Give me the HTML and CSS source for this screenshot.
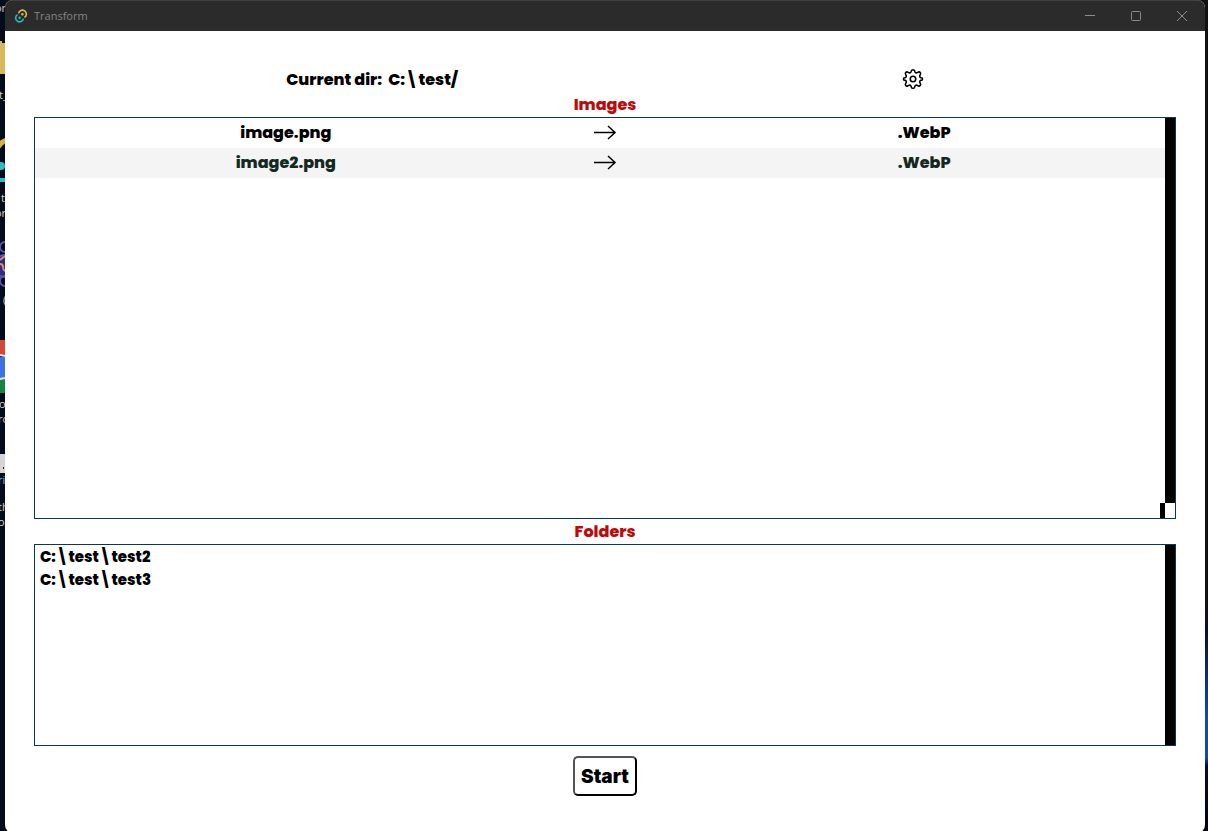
FILE: index.html
```html
<!DOCTYPE html>
<html lang="en">
<head>
<meta charset="utf-8">
<meta name="viewport" content="width=device-width, initial-scale=1">
<title>Transform</title>
<link rel="stylesheet" href="styles.css">
</head>
<body>
<svg class="desktop-left" width="5" height="831" viewBox="0 0 5 831" aria-hidden="true">
  <path fill="#d9b85c" d="M0 41h2v2h3v31H0z"/>
  <path fill="none" stroke="#d9b03c" stroke-width="5" d="M-2 147Q2 141 7 140"/>
  <circle cx="1" cy="166" r="4" fill="#2fb9c4"/>
  <path fill="#2fb9c4" d="M0 178h5v4H0z"/>
  <path fill="#332c78" d="M0 255h5v22H0z"/>
  <g fill="none" stroke="#5a52b0" stroke-width="2"><circle cx="5" cy="247" r="5"/><circle cx="5" cy="266" r="11"/><circle cx="5" cy="281" r="5"/></g>
  <path fill="none" stroke="#d98a80" stroke-width="2" d="M0 260l5-4M0 264q3 0 3 3t2 4"/>
  <path fill="#d34836" d="M0 340h5v15H0z"/><path fill="#3b74e0" d="M0 357h5v21H0z"/>
  <path fill="#188040" d="M0 379h5v14H0z"/><path stroke="#e0e4ef" stroke-width="2" d="M0 355l5 1M0 379l5-1"/>
  <path fill="#d5d5d5" d="M0 454h5v19H0z"/><path fill="#222" d="M3 467h1v2H3z"/>
  <g class="desktop-label">
    <text x="-5" y="12">or</text><text x="-1" y="99">t_</text><text x="1" y="202">t</text>
    <text x="-5" y="217">or</text><text x="3" y="304">(</text><text x="-1" y="408">o</text>
    <text x="-2" y="423">ro</text><text class="link" x="-2" y="484">ri</text>
    <text x="-2" y="511">th</text><text x="-2" y="526">o</text>
  </g>
</svg>
<div class="window">
  <header class="titlebar">
    <svg class="logo" width="14" height="14" viewBox="0 0 14 14" fill="none" aria-hidden="true">
      <path stroke="#e8b94a" stroke-width="1.6" d="M4.6 4.4A3.9 3.9 0 1 1 10.4 8.4"/>
      <path stroke="#27b8c6" stroke-width="1.6" d="M9.4 9.6A3.9 3.9 0 1 1 3.6 5.6"/>
      <circle cx="8.4" cy="5.2" r="1.2" fill="#e8b94a"/><circle cx="5.6" cy="8.8" r="1.2" fill="#27b8c6"/>
    </svg>
    <span class="title">Transform</span>
    <div class="controls">
      <button class="control" type="button" aria-label="Minimize"><svg width="12" height="12" viewBox="0 0 12 12"><path d="M1 5.5h10"/></svg></button>
      <button class="control" type="button" aria-label="Maximize"><svg width="12" height="12" viewBox="0 0 12 12"><rect x="1.5" y="1.5" width="9" height="9" rx="1"/></svg></button>
      <button class="control" type="button" aria-label="Close"><svg width="12" height="12" viewBox="0 0 12 12"><path d="M1 1l10 10M11 1L1 11"/></svg></button>
    </div>
  </header>
  <main class="content">
    <div class="toolbar">
      <span>Current dir: <span class="path">C:\test/</span></span>
      <button class="settings" type="button" aria-label="Settings">
        <svg width="22" height="22" viewBox="0 0 24 24" fill="none" stroke="#000" stroke-width="1.7" stroke-linejoin="round" stroke-linecap="round"><circle cx="12" cy="12" r="3"/><path d="M10.2 3.1a1.9 1.9 0 0 1 3.6 0l.2.9a1.8 1.8 0 0 0 2.6 1.1l.9-.5a1.8 1.8 0 0 1 2.5 2.5l-.5.9a1.8 1.8 0 0 0 1.1 2.6l.5.1a1.3 1.3 0 0 1 0 2.6l-.5.1a1.8 1.8 0 0 0-1.1 2.6l.5.9a1.8 1.8 0 0 1-2.5 2.5l-.9-.5a1.8 1.8 0 0 0-2.6 1.1l-.2.9a1.9 1.9 0 0 1-3.6 0l-.2-.9a1.8 1.8 0 0 0-2.6-1.1l-.9.5a1.8 1.8 0 0 1-2.5-2.5l.5-.9a1.8 1.8 0 0 0-1.1-2.6l-.5-.1a1.3 1.3 0 0 1 0-2.6l.5-.1a1.8 1.8 0 0 0 1.1-2.6l-.5-.9a1.8 1.8 0 0 1 2.5-2.5l.9.5a1.8 1.8 0 0 0 2.6-1.1z"/></svg>
      </button>
    </div>
    <h2 class="heading">Images</h2>
    <section class="panel images">
      <ul class="list">
        <li class="image-row"><span>image.png</span><svg class="arrow" width="24" height="16" viewBox="0 0 24 16"><path d="M1 8.5h21M15 2l7 6.5-7 6.5"/></svg><span>.WebP</span></li>
        <li class="image-row"><span>image2.png</span><svg class="arrow" width="24" height="16" viewBox="0 0 24 16"><path d="M1 8.5h21M15 2l7 6.5-7 6.5"/></svg><span>.WebP</span></li>
      </ul>
      <div class="scrollbar"><span class="corner"></span></div>
    </section>
    <h2 class="heading">Folders</h2>
    <section class="panel folders">
      <ul class="list folder-list">
        <li>C:\test\test2</li>
        <li>C:\test\test3</li>
      </ul>
      <div class="scrollbar"></div>
    </section>
    <button class="start" type="button">Start</button>
  </main>
</div>
</body>
</html>
```
FILE: styles.css
```css
* { box-sizing: border-box; }
body {
  margin: 0;
  min-height: 100vh;
  display: flex;
  background: linear-gradient(#111 0, #111 72%, #06103a 76%, #0b4da0 86%, #0b4da0 91%, #050a30 92%, #01020c);
  font-family: Poppins, Inter, "Open Sans", sans-serif;
  font-size: 16px;
  font-weight: 800;
  color: #000;
}
.desktop-left { flex: none; background: #020c1c; }
.desktop-label { font: 400 11px "Open Sans", sans-serif; fill: #d8d2c0; }
.link { fill: #7dbbe8; }
.window {
  flex: 1;
  min-width: 0;
  margin-right: 3px;
  display: flex;
  flex-direction: column;
  background: #fff;
  border-radius: 8px;
  overflow: hidden;
}
.titlebar {
  height: 31px;
  display: flex;
  align-items: center;
  gap: 6px;
  padding: 0 0 1px 9px;
  background: #2b2b2b;
  border-top: 1px solid #424242;
}
.title { font: 400 11px "Open Sans", sans-serif; color: #858585; }
.controls { display: flex; height: 100%; margin-left: auto; }
.control {
  width: 46px;
  padding: 0;
  border: 0;
  background: none;
}
.control svg { display: block; margin: auto; fill: none; stroke: #8c8c8c; }
.content {
  flex: 1;
  display: flex;
  flex-direction: column;
  padding: 37px 29px;
}
.toolbar {
  display: flex;
  justify-content: space-between;
  align-items: center;
  height: 24px;
  margin: 0 1px;
  padding: 0 22%;
}
.toolbar, .heading { line-height: 24px; }
.path { margin-left: 3px; }
.settings { display: flex; padding: 0 0 2px; border: 0; background: none; }
.heading {
  margin: 1px 0 0;
  font-size: 16px;
  font-weight: 800;
  color: #bd0b0b;
  text-align: center;
}
.toolbar, .panel { flex-shrink: 0; }
.panel { position: relative; border: 1px solid #073b4c; }
.images { min-height: 402px; }
.folders { min-height: 202px; }
.list { list-style: none; margin: 0; padding: 0; }
.image-row {
  display: grid;
  grid-template-columns: repeat(3, 28%);
  justify-content: center;
  justify-items: center;
  align-items: center;
  height: 30px;
  padding-bottom: 2px;
}
.image-row:nth-child(even) { background: #f4f4f4; color: #13291f; }
.arrow { fill: none; stroke: #000; stroke-width: 1.5; }
.folder-list { padding-left: 5px; font-size: 15px; line-height: 23px; }
.scrollbar { position: absolute; top: 0; right: 0; bottom: 0; width: 10px; background: #000; }
.corner {
  position: absolute;
  right: 0;
  bottom: 0;
  width: 15px;
  height: 15px;
  background: #fff;
  border-left: 5px solid #000;
}
.start {
  align-self: center;
  margin-top: 10px;
  height: 40px;
  padding: 0 6px;
  background: #fff;
  border: 2px outset #000;
  border-radius: 5px;
  font: 900 19px Inter, sans-serif;
  color: #000;
}
```
